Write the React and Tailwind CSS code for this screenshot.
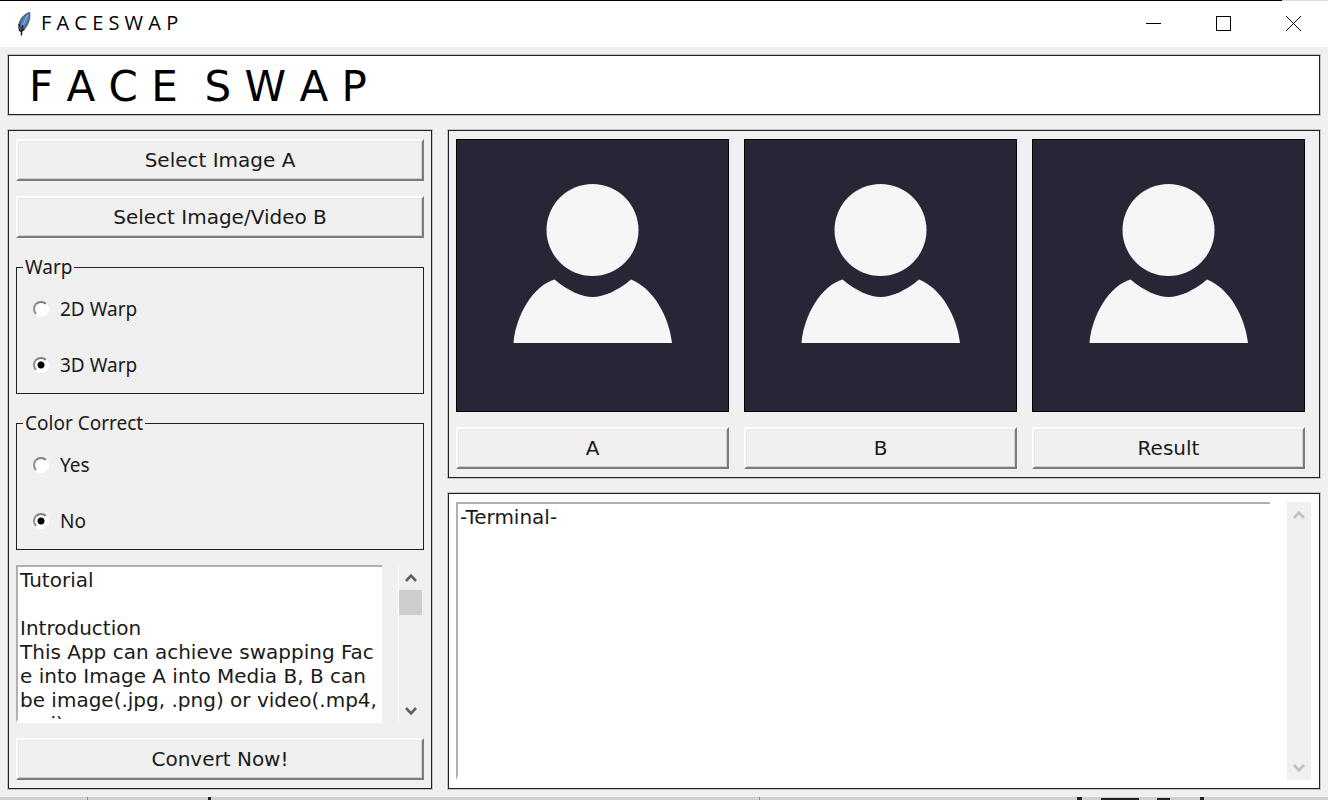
import React, { useState } from "react";

const TUTORIAL = `Tutorial

Introduction
This App can achieve swapping Fac
e into Image A into Media B, B can
be image(.jpg, .png) or video(.mp4,
.avi)`;

function Feather() {
  return (
    <svg width="16" height="26" viewBox="0 0 16 26" aria-hidden="true">
      <path d="M14 1 C10 1.5 5 5.5 3 11 C1.8 14.5 1.8 18 3.4 20.5 L5.5 21 C9 19 12.5 14 13.8 9 C14.5 6 14.6 3 14 1 Z" fill="#59636d" />
      <path d="M12.8 2.4 C9.5 3.6 6.2 8 5 12 C4.2 15 4.2 17.5 4.8 19 C8.5 16.5 11.2 12.5 12.4 8.5 C13 6.2 13.2 4.2 12.8 2.4 Z" fill="#4a86c6" />
      <path d="M12 4 C9 8.5 7 13.5 5.6 19" stroke="#8ab8e2" strokeWidth="1" fill="none" />
      <path d="M7 14 C5.8 17 5.4 20 5.4 24.5" stroke="#15181c" strokeWidth="1.4" fill="none" />
      <path d="M2.6 13 L4.4 17 M3 18 L5 20.5 M8.4 18 L5.8 20" stroke="#15181c" strokeWidth="1.2" fill="none" />
    </svg>
  );
}

function TitleBar() {
  return (
    <header className="flex h-[46px] items-center bg-white pb-px pl-4">
      <Feather />
      <span className="ml-[9px] grow whitespace-pre pb-0.5 font-['Open_Sans',sans-serif] text-xl leading-6 text-black">
        F A C E S W A P
      </span>
      <button aria-label="Minimize" className="flex h-full w-[70px] items-center justify-center">
        <svg width="15" height="15" viewBox="0 0 15 15" shapeRendering="crispEdges">
          <path d="M0 7.5H15" stroke="#000" />
        </svg>
      </button>
      <button aria-label="Maximize" className="flex h-full w-[70px] items-center justify-center">
        <svg width="15" height="15" viewBox="0 0 15 15" shapeRendering="crispEdges">
          <rect x="0.5" y="0.5" width="14" height="14" fill="none" stroke="#000" />
        </svg>
      </button>
      <button aria-label="Close" className="flex h-full w-[70px] items-center justify-center">
        <svg width="15" height="15" viewBox="0 0 15 15">
          <path d="M0 0L15 15M15 0L0 15" stroke="#000" />
        </svg>
      </button>
    </header>
  );
}

function PushButton({ children }) {
  return (
    <button className="h-[42px] w-full border-2 border-t-white border-l-white border-r-[#7c7c7c] border-b-[#7c7c7c] bg-[#f0f0f0] text-xl leading-6 shadow-[inset_1px_1px_0_#e5e5e5,inset_-1px_-1px_0_#d0d0d0]">
      {children}
    </button>
  );
}

function RadioGroup({ legend, name, options, initial }) {
  const [value, setValue] = useState(initial);
  return (
    <fieldset className="border border-[#222222] pl-4 font-['Noto_Sans',sans-serif] text-[19px]">
      <legend className="-ml-2.5 px-0.5 leading-7">{legend}</legend>
      <div className="flex flex-col gap-8 pt-4 pb-4">
        {options.map((o) => (
          <label key={o} className="flex items-center gap-[11px] leading-6">
            <input
              type="radio"
              name={name}
              checked={value === o}
              onChange={() => setValue(o)}
              className="size-4 appearance-none rounded-full border-2 border-t-[#808080] border-l-[#909090] border-r-white border-b-white bg-white checked:bg-[radial-gradient(circle,#000_2px,#000_3px,#fff_4px)]"
            />
            {o}
          </label>
        ))}
      </div>
    </fieldset>
  );
}

function Chevron({ down }) {
  return (
    <svg width="12" height="10" viewBox="0 0 12 10" fill="none" stroke="currentColor" strokeWidth="2.6">
      <path d={down ? "M1 2L6 7.4L11 2" : "M1 8L6 2.6L11 8"} />
    </svg>
  );
}

function ScrollBar({ active }) {
  return (
    <div
      className={
        active
          ? "flex w-6 shrink-0 flex-col border-l border-white bg-[#f0f0f0] text-[#606060]"
          : "flex w-6 shrink-0 flex-col bg-[#f0f0f0] text-[#c0c0c0]"
      }
    >
      <button aria-label="Scroll up" className="flex h-[25px] items-center justify-center">
        <Chevron />
      </button>
      <div className="grow">{active && <div className="h-[25px] bg-[#cdcdcd]" />}</div>
      <button aria-label="Scroll down" className="flex h-[25px] items-center justify-center">
        <Chevron down />
      </button>
    </div>
  );
}

function Portrait({ label }) {
  return (
    <div className="flex flex-col gap-[15px]">
      <div className="aspect-square border border-black bg-[#282636]">
        <svg className="block size-full" viewBox="1 1 271 271" role="img" aria-label={label}>
          <circle cx="136.5" cy="91" r="46" fill="#f6f6f6" />
          <path
            d="M57.5 204C60 176 77 147 98.5 140.5C112 151.5 125 158 136.5 158C148 158 162 151.5 175 140.5C196 148.5 213 176 216 204Z"
            fill="#f6f6f6"
          />
        </svg>
      </div>
      <PushButton>{label}</PushButton>
    </div>
  );
}

const textBox =
  "min-w-0 grow resize-none overflow-hidden whitespace-pre border-t-2 border-b-4 border-l-2 border-t-[#b0b0b0] border-b-white border-l-[#b0b0b0] bg-white pt-px pl-0.5 text-xl leading-6 outline-none";

export default function App() {
  return (
    <div className="flex min-h-screen flex-col bg-[#f0f0f0] font-['DejaVu_Sans',sans-serif] text-[#1a1a1a]">
      <div className="flex h-px">
        <div className="grow bg-black" />
        <div className="w-[46px] bg-[#dcdcdc]" />
      </div>
      <TitleBar />
      <main className="flex grow flex-col gap-[15px] px-2 py-2">
        <h1 className="flex h-[60px] items-center whitespace-pre border border-[#222222] bg-white pt-1 pl-5 text-[42px] leading-none text-black outline-1 outline-[#c4c4c4]">
          {"F A C E  S W A P"}
        </h1>
        <div className="flex grow gap-4">
          <section className="flex w-[424px] shrink-0 flex-col gap-[15px] border border-[#222222] px-[7px] py-2 outline-1 outline-[#c4c4c4]">
            <PushButton>Select Image A</PushButton>
            <PushButton>Select Image/Video B</PushButton>
            <RadioGroup legend="Warp" name="warp" options={["2D Warp", "3D Warp"]} initial="3D Warp" />
            <RadioGroup legend="Color Correct" name="color" options={["Yes", "No"]} initial="No" />
            <div className="flex min-h-[156px] grow gap-4 pr-0.5">
              <textarea aria-label="Tutorial" readOnly value={TUTORIAL} className={textBox} />
              <ScrollBar active />
            </div>
            <PushButton>Convert Now!</PushButton>
          </section>
          <div className="flex min-w-0 grow flex-col gap-[15px]">
            <section className="grid grid-cols-3 gap-[15px] border border-[#222222] py-2 pr-[14px] pl-[7px] outline-1 outline-[#c4c4c4]">
              <Portrait label="A" />
              <Portrait label="B" />
              <Portrait label="Result" />
            </section>
            <section className="flex grow gap-[17px] border border-[#222222] bg-white py-2 pr-2 pl-[7px] outline-1 outline-[#c4c4c4]">
              <textarea aria-label="Terminal" defaultValue="-Terminal-" className={textBox} />
              <ScrollBar />
            </section>
          </div>
        </div>
      </main>
      <svg className="block h-[3px] w-full" viewBox="0 0 1328 3" preserveAspectRatio="none" aria-hidden="true">
        <rect width="1328" height="3" fill="#cfcfcf" />
        <rect x="87" width="1" height="3" fill="#888" />
        <rect x="759" width="1" height="3" fill="#888" />
        <path d="M208 0h3v3h-3zM1077 0h5v3h-5zM1101 1h38v2h-38zM1157 1h13v2h-13zM1200 0h4v3h-4z" fill="#222" />
      </svg>
    </div>
  );
}
